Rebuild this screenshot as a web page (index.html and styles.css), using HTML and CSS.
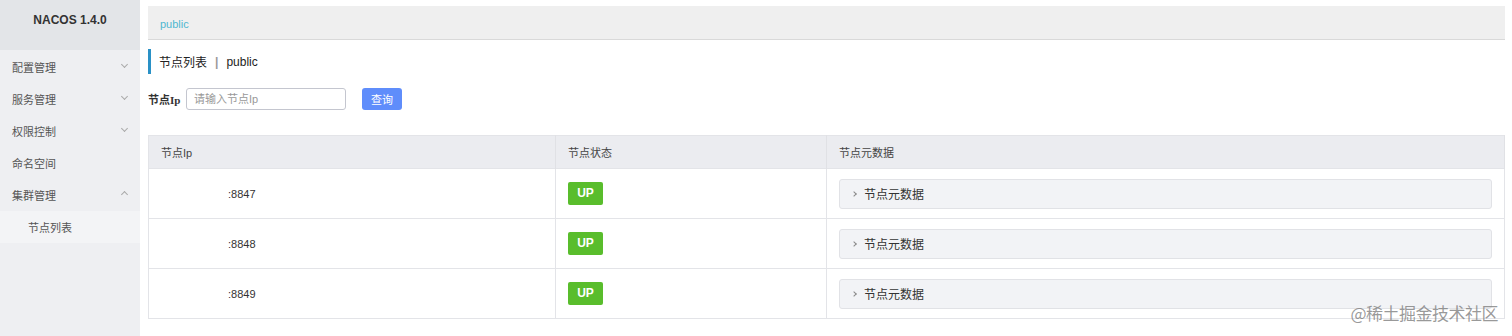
FILE: index.html
```html
<!DOCTYPE html>
<html lang="zh-CN">

<head>
    <meta charset="UTF-8">
    <meta name="viewport" content="width=device-width, initial-scale=1.0">
    <title>Nacos - 节点列表</title>
    <link rel="stylesheet" href="styles.css">
</head>

<body>
    <!-- Left navigation -->
    <aside class="sidebar">
        <div class="brand">NACOS 1.4.0</div>
        <ul class="menu">
            <li class="menu-item">配置管理 <span class="arrow down"></span></li>
            <li class="menu-item">服务管理 <span class="arrow down"></span></li>
            <li class="menu-item">权限控制 <span class="arrow down"></span></li>
            <li class="menu-item">命名空间</li>
            <li class="menu-item">集群管理 <span class="arrow up"></span></li>
            <li class="menu-sub">节点列表</li>
        </ul>
    </aside>

    <!-- Main content -->
    <main class="main">
        <div class="namespace-bar"><span class="ns">public</span></div>

        <div class="page-title">节点列表<span class="sep">|</span>public</div>

        <div class="search">
            <label class="search-label">节点Ip</label>
            <input class="search-input" type="text" placeholder="请输入节点Ip">
            <button class="search-btn">查询</button>
        </div>

        <table class="node-table">
            <thead>
                <tr>
                    <th class="col-ip">节点Ip</th>
                    <th class="col-state">节点状态</th>
                    <th>节点元数据</th>
                </tr>
            </thead>
            <tbody>
                <tr>
                    <td><span class="ip-mask"></span>:8847</td>
                    <td><span class="tag-up">UP</span></td>
                    <td><div class="collapse"><span class="chev"></span>节点元数据</div></td>
                </tr>
                <tr>
                    <td><span class="ip-mask"></span>:8848</td>
                    <td><span class="tag-up">UP</span></td>
                    <td><div class="collapse"><span class="chev"></span>节点元数据</div></td>
                </tr>
                <tr>
                    <td><span class="ip-mask"></span>:8849</td>
                    <td><span class="tag-up">UP</span></td>
                    <td><div class="collapse"><span class="chev"></span>节点元数据</div></td>
                </tr>
            </tbody>
        </table>
    </main>

    <div class="watermark">@稀土掘金技术社区</div>
</body>

</html>
```

FILE: styles.css
```css
* {
    box-sizing: border-box;
}

body {
    margin: 0;
    height: 336px;
    overflow: hidden;
    display: flex;
    font-family: "Liberation Sans", "Noto Sans CJK SC", sans-serif;
    font-size: 12px;
    color: #333;
    background: #fff;
}

/* Sidebar */
.sidebar {
    width: 140px;
    flex-shrink: 0;
    background: #eeeff2;
}

.brand {
    height: 50px;
    padding-top: 13px;
    background: #e3e5e8;
    text-align: center;
    font-weight: bold;
    font-size: 12px;
    color: #333;
}

.menu {
    list-style: none;
    margin: 0;
    padding: 1px 0 0;
}

.menu-item {
    height: 32px;
    padding: 0 12px;
    display: flex;
    align-items: center;
    justify-content: space-between;
    font-size: 11px;
    color: #555;
}

.menu-sub {
    height: 32px;
    padding-left: 28px;
    display: flex;
    align-items: center;
    font-size: 11px;
    color: #555;
    background: #f3f4f6;
}

.arrow {
    width: 5px;
    height: 5px;
    border-right: 1px solid #aaa;
    border-bottom: 1px solid #aaa;
    margin-right: 1px;
}

.arrow.down {
    transform: rotate(45deg);
    margin-top: -6px;
}

.arrow.up {
    transform: rotate(-135deg);
    margin-top: -2px;
}

/* Main */
.main {
    flex: 1;
    padding: 6px 7px 0 8px;
}

.namespace-bar {
    height: 34px;
    background: #efefef;
    border-bottom: 1px solid #d9d9d9;
    padding: 3px 12px 0;
    display: flex;
    align-items: center;
}

.ns {
    font-size: 11px;
    color: #4eb7cf;
}

.page-title {
    margin-top: 9px;
    height: 25px;
    border-left: 3px solid #2a91c6;
    padding-left: 8px;
    display: flex;
    align-items: center;
    font-size: 12px;
    color: #222;
}

.sep {
    margin: 0 8px;
    color: #999;
    font-weight: bold;
}

.search {
    margin-top: 14px;
    display: flex;
    align-items: center;
    height: 22px;
}

.search-label {
    width: 38px;
    font-family: "Liberation Serif", "Noto Sans CJK SC", serif;
    font-weight: bold;
    font-size: 11px;
    color: #333;
}

.search-input {
    width: 160px;
    height: 22px;
    border: 1px solid #c4c6cf;
    border-radius: 3px;
    padding: 0 7px;
    font-family: "Liberation Sans", "Noto Sans CJK SC", sans-serif;
    font-size: 11px;
    outline: none;
}

.search-input::placeholder {
    color: #999;
}

.search-btn {
    margin-left: 16px;
    width: 40px;
    height: 22px;
    border: none;
    border-radius: 3px;
    background: #5f8dfb;
    color: #fff;
    font-family: "Liberation Sans", "Noto Sans CJK SC", sans-serif;
    font-size: 11px;
    padding: 0;
}

/* Table */
.node-table {
    margin-top: 25px;
    width: 100%;
    border-collapse: collapse;
    border: 1px solid #e3e4e8;
}

.node-table th {
    height: 33px;
    background: #ebecf0;
    text-align: left;
    font-weight: normal;
    font-size: 11px;
    color: #444;
    padding: 0 12px;
    border-right: 1px solid #e0e1e5;
}

.node-table td {
    height: 50px;
    padding: 0 12px;
    border-top: 1px solid #e3e4e8;
    border-right: 1px solid #e3e4e8;
    font-size: 11px;
    color: #333;
}

.col-ip {
    width: 407px;
}

.col-state {
    width: 271px;
}

.ip-mask {
    display: inline-block;
    width: 67px;
}

.tag-up {
    display: inline-block;
    width: 35px;
    height: 23px;
    line-height: 23px;
    border-radius: 2px;
    background: #59bd2c;
    color: #fff;
    text-align: center;
    font-weight: bold;
    font-size: 12px;
}

.collapse {
    height: 30px;
    background: #f2f3f6;
    border: 1px solid #e1e2e6;
    border-radius: 3px;
    display: flex;
    align-items: center;
    padding-left: 12px;
    font-size: 12px;
    color: #333;
}

.chev {
    width: 4px;
    height: 4px;
    border-right: 1px solid #888;
    border-bottom: 1px solid #888;
    transform: rotate(-45deg);
    margin-right: 8px;
}

.watermark {
    position: absolute;
    right: 14px;
    top: 300px;
    font-family: "Noto Sans CJK SC", sans-serif;
    font-size: 17px;
    letter-spacing: -0.5px;
    color: rgba(120, 120, 120, 0.75);
}
```
